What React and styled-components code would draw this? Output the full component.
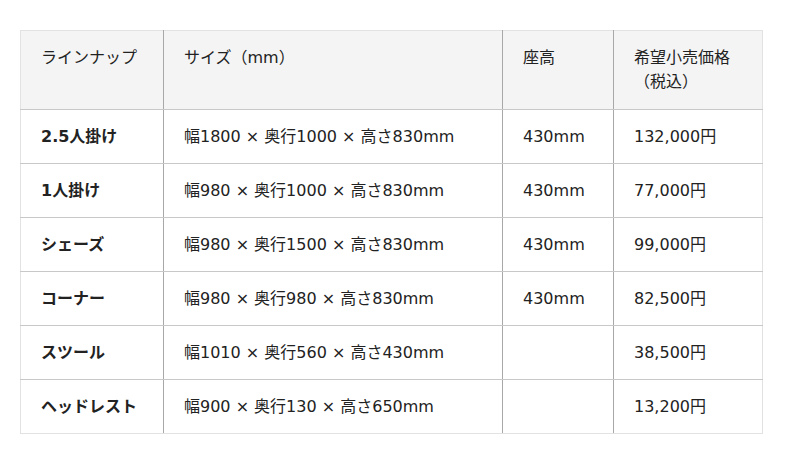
import React from 'react';
import styled, { createGlobalStyle } from 'styled-components';

const GlobalStyle = createGlobalStyle`
  body {
    margin: 0;
    background: #fff;
    font-family: "DejaVu Sans", "Noto Sans CJK JP", sans-serif;
    color: #222;
  }
`;

const Wrapper = styled.div`
  padding: 30px 20px;
`;

const Table = styled.table`
  width: 742px;
  border-collapse: collapse;
  table-layout: fixed;
  font-size: 16px;
  line-height: 24px;
  border: 1px solid #e2e2e2;
`;

const Head = styled.th`
  background: #f4f4f4;
  font-weight: normal;
  text-align: left;
  vertical-align: top;
  padding: 15px 20px;
  border-bottom: 1px solid #c8c8c8;
  border-left: 1px solid #a8a8a8;
  &:first-child {
    border-left: 1px solid #e2e2e2;
  }
`;

const Cell = styled.td`
  padding: 15px 20px 14px;
  vertical-align: top;
  font-weight: ${(p) => (p.$bold ? 'bold' : 'normal')};
  border-bottom: 1px solid #c8c8c8;
  border-left: 1px solid #a8a8a8;
  &:first-child {
    border-left: 1px solid #e2e2e2;
  }
  tr:last-child > & {
    border-bottom: 1px solid #e2e2e2;
  }
`;

const rows = [
  ['2.5人掛け', '幅1800 × 奥行1000 × 高さ830mm', '430mm', '132,000円'],
  ['1人掛け', '幅980 × 奥行1000 × 高さ830mm', '430mm', '77,000円'],
  ['シェーズ', '幅980 × 奥行1500 × 高さ830mm', '430mm', '99,000円'],
  ['コーナー', '幅980 × 奥行980 × 高さ830mm', '430mm', '82,500円'],
  ['スツール', '幅1010 × 奥行560 × 高さ430mm', '', '38,500円'],
  ['ヘッドレスト', '幅900 × 奥行130 × 高さ650mm', '', '13,200円'],
];

export default function App() {
  return (
    <>
      <GlobalStyle />
      <Wrapper>
        <Table>
          <colgroup>
            <col style={{ width: 143 }} />
            <col style={{ width: 339 }} />
            <col style={{ width: 111 }} />
            <col style={{ width: 149 }} />
          </colgroup>
          <thead>
            <tr>
              <Head>ラインナップ</Head>
              <Head>サイズ（mm）</Head>
              <Head>座高</Head>
              <Head>希望小売価格<br />（税込）</Head>
            </tr>
          </thead>
          <tbody>
            {rows.map((r) => (
              <tr key={r[0]}>
                <Cell $bold>{r[0]}</Cell>
                <Cell>{r[1]}</Cell>
                <Cell>{r[2]}</Cell>
                <Cell>{r[3]}</Cell>
              </tr>
            ))}
          </tbody>
        </Table>
      </Wrapper>
    </>
  );
}
